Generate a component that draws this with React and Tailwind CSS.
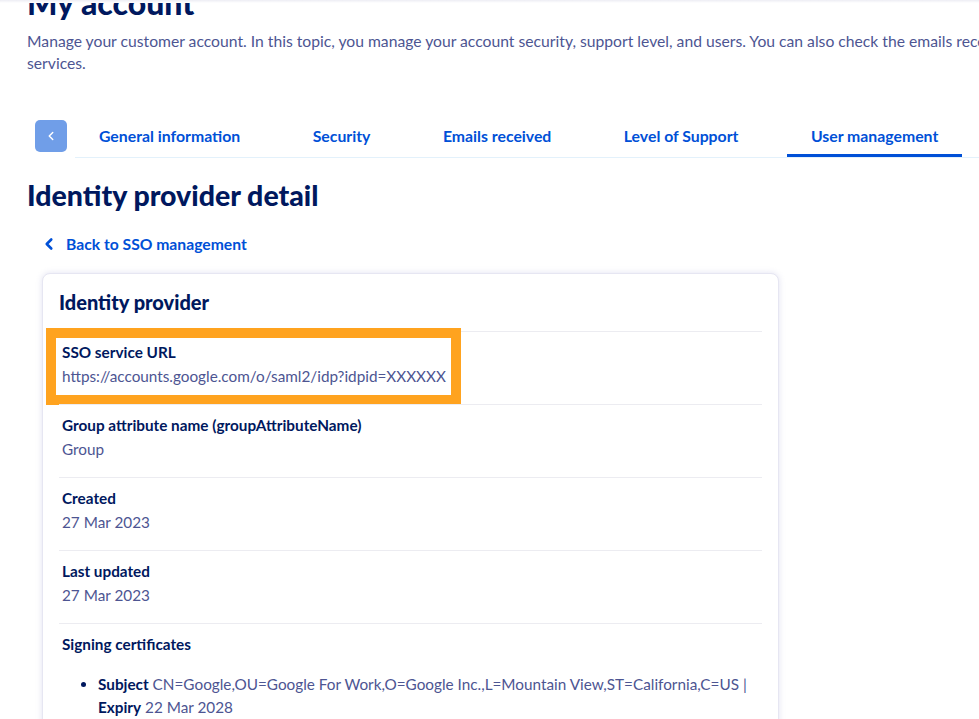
import { ChevronLeft } from 'lucide-react'

const tabs = ['General information', 'Security', 'Emails received', 'Level of Support', 'User management']

const Row = ({ label, value, highlight, children }) => (
  <div className="relative border-t border-[#ececf1] pt-[8px] pb-[16px] pl-[3px]">
    {highlight && (
      <div className="pointer-events-none absolute left-[-13px] top-[-4px] h-[77px] w-[415px] border-[10px] border-[#ffa31f]" />
    )}
    <p className="text-[15.3px] font-bold leading-[24px] text-[#00185e]">{label}</p>
    {value && <p className="text-[15.3px] leading-[24px] text-[#4d5592]">{value}</p>}
    {children}
  </div>
)

export default function App() {
  return (
    <div
      className="relative h-[719px] w-[979px] overflow-hidden bg-white"
      style={{ fontFamily: 'Lato, "Noto Sans", sans-serif' }}
    >
      <div className="absolute inset-x-0 top-0 h-[3px] bg-gradient-to-b from-[#ededf4] to-white" />
      <div className="w-[1200px] px-[27px]">
        <h1 className="mt-[-17px] text-[32px] font-black leading-[40px] text-[#00185e]">My account</h1>
        <p className="mt-[7px] text-[15.7px] leading-[22px] text-[#4d5592]">
          <span className="whitespace-nowrap">
            Manage your customer account. In this topic, you manage your account security, support level, and users. You can also check the emails received from OVHcloud
          </span>
          <br />
          services.
        </p>

        <div className="mt-[38px] flex items-start">
          <button
            type="button"
            className="ml-[8px] mt-[8px] flex h-[32px] w-[32px] items-center justify-center rounded-[5px] bg-[#709ee8] text-white"
          >
            <ChevronLeft className="h-[14px] w-[14px]" strokeWidth={2.5} />
          </button>
          <div className="ml-[8px] flex w-[930px] gap-[24.5px] border-b border-[#e3f1fb]">
            {tabs.map((t) => (
              <div
                key={t}
                className={`border-b-[3px] px-6 pt-[13px] pb-[7px] text-[15.8px] font-bold leading-[22px] text-[#0050d7] ${
                  t === 'User management' ? 'border-[#0050d7]' : 'border-transparent'
                }`}
              >
                {t}
              </div>
            ))}
          </div>
        </div>

        <h2 className="mt-[19px] text-[28.5px] font-black leading-[36px] text-[#00185e]">Identity provider detail</h2>

        <a className="mt-[19px] flex items-center gap-[8px] pl-[13px] text-[15.7px] font-bold leading-[24px] text-[#0050d7]">
          <ChevronLeft className="h-[18px] w-[18px]" strokeWidth={3.5} />
          Back to SSO management
        </a>

        <div className="ml-[15px] mt-[17px] w-[737px] rounded-[8px] border border-[#e6e6f2] bg-white px-[16px] pt-[14px] shadow-[0_0_6px_rgba(190,190,225,0.45)]">
          <h3 className="mb-[15px] text-[20px] font-black leading-[28px] text-[#00185e]">Identity provider</h3>
          <Row label="SSO service URL" value="https://accounts.google.com/o/saml2/idp?idpid=XXXXXX" highlight />
          <Row label="Group attribute name (groupAttributeName)" value="Group" />
          <Row label="Created" value="27 Mar 2023" />
          <Row label="Last updated" value="27 Mar 2023" />
          <Row label="Signing certificates">
            <ul className="mt-[17px] list-disc pl-[36px] text-[15.3px] leading-[23px] text-[#4d5592] marker:text-[#00185e]">
              <li>
                <span className="whitespace-nowrap">
                  <span className="font-bold text-[#00185e]">Subject</span> CN=Google,OU=Google For Work,O=Google Inc.,L=Mountain View,ST=California,C=US |
                </span>
                <br />
                <span className="font-bold text-[#00185e]">Expiry</span> 22 Mar 2028
              </li>
            </ul>
          </Row>
        </div>
      </div>
    </div>
  )
}
